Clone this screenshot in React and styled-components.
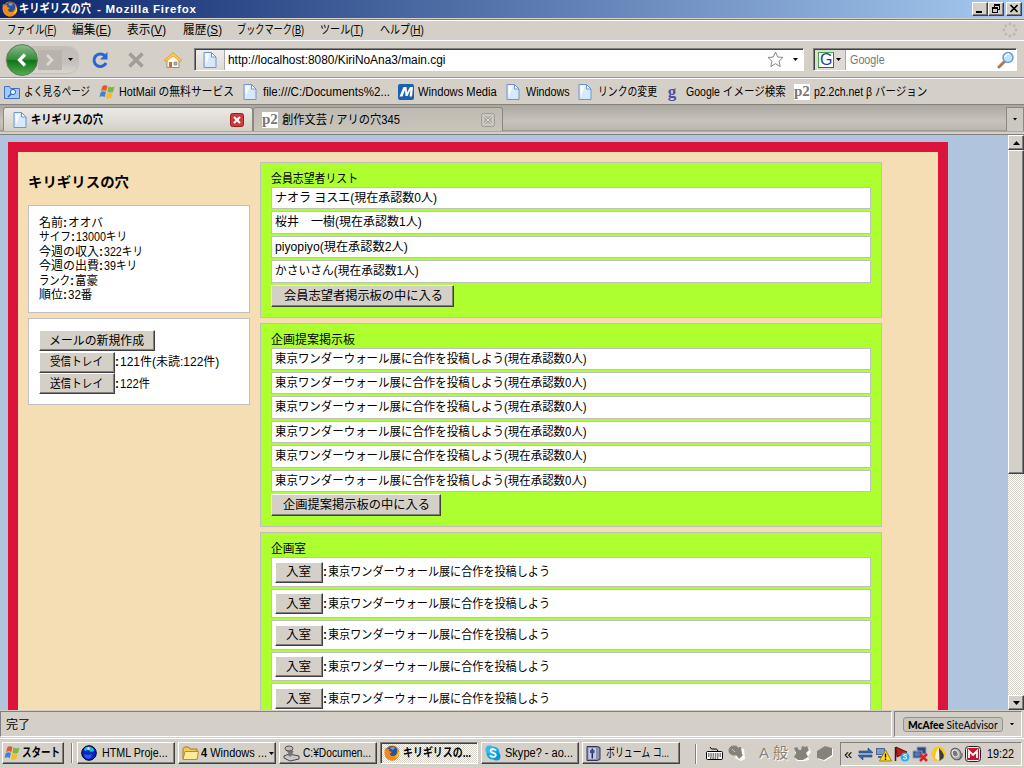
import { useLayoutEffect, useRef, useState } from 'react';
import styled, { createGlobalStyle, css } from 'styled-components';

const applicants = [
  { label: 'ナオラ ヨスエ(現在承認数0人)', w: 162 },
  { label: '桜井　一樹(現在承認数1人)', w: 147 },
  { label: 'piyopiyo(現在承認数2人)', w: 133 },
  { label: 'かさいさん(現在承認数1人)', w: 144 },
];

const proposals = Array(6).fill('東京ワンダーウォール展に合作を投稿しよう(現在承認数0人)');
const rooms = Array(5).fill('東京ワンダーウォール展に合作を投稿しよう');

const profile = [
  ['名前', 24, 'オオバ', 35],
  ['サイフ', 32, '13000キリ', 51],
  ['今週の収入', 60, '322キリ', 39],
  ['今週の出費', 60, '39キリ', 33],
  ['ランク', 31, '富豪', 23],
  ['順位', 24, '32番', 24],
];

const menus = [
  ['ファイル', 'F', 49, 16],
  ['編集', 'E', 39, 16],
  ['表示', 'V', 39, 17],
  ['履歴', 'S', 39, 15],
  ['ブックマーク', 'B', 67, 16],
  ['ツール', 'T', 43, 17],
  ['ヘルプ', 'H', 44, 0],
];

// 文字列を指定の幅に合わせて横に縮める
const Fit = ({ w, children }) => {
  const ref = useRef();
  const [scale, setScale] = useState(1);

  useLayoutEffect(() => {
    setScale(w / ref.current.offsetWidth);
  }, [w]);

  return (
    <FitBox $w={w}>
      <FitInner ref={ref} style={{ transform: `scaleX(${scale})` }}>
        {children}
      </FitInner>
    </FitBox>
  );
};

const FirefoxIcon = () => (
  <svg width="16" height="16" viewBox="0 0 16 16">
    <circle cx="8" cy="8" r="7.4" fill="#d9600c" />
    <circle cx="8.3" cy="6.6" r="5.3" fill="#24549c" />
    <path d="M6 3q3-2 5 0l-2 2-2-1z" fill="#62a9dc" />
    <path d="M1 3l2 1.5L5.5 4 5 6l3 1-2 1.5c0 3 4 3.5 6 1 1.5-2 1.5-4 .5-6.5C17 7 15 15 8.5 15.5 2 15.5-.5 9 1 3z" fill="#f08a1c" />
    <path d="M13 4c2 3 1 7-2 8.500 3 0 4-2 4-4.500z" fill="#ffd84a" />
  </svg>
);

const PageIcon = () => (
  <svg width="14" height="16" viewBox="0 0 14 16">
    <path d="M1 .5h7.500L13 5v10.500H1z" fill="#d7e8fb" stroke="#6d96cf" />
    <path d="M2 1.500h5L3 13z" fill="#fff" opacity=".8" />
    <path d="M8.500.5V5H13z" fill="#fff" stroke="#6d96cf" />
  </svg>
);

const WinFlag = () => (
  <svg width="17" height="16" viewBox="0 0 17 16">
    <path d="M3.500 2Q6 .5 8.500 2L7.300 7Q5 5.500 2 7z" fill="#e8562a" />
    <path d="M9.500 2.500q3 1.500 6 0L14 8q-3 1.300-5.600-.3z" fill="#7db93a" />
    <path d="M1.700 8q3-1.500 5.300 0l-1.300 5Q3 11.500.5 13z" fill="#3f82d8" />
    <path d="M8 8.700q3 1.500 5.700.3l-1.400 5Q9 15.500 6.700 14z" fill="#f5bd2c" />
  </svg>
);

const SearchFolder = () => (
  <svg width="16" height="14" viewBox="0 0 16 14">
    <path d="M.5 1.500h5l1 2h9v10H.5z" fill="#a9c9f5" stroke="#3f71c9" />
    <circle cx="9" cy="7" r="2.600" fill="#e5f1ff" stroke="#2f62bd" />
    <path d="M7 9l-3 3" stroke="#2f62bd" strokeWidth="1.500" />
  </svg>
);

const MediaIcon = () => (
  <svg width="16" height="16" viewBox="0 0 16 16">
    <rect width="16" height="16" rx="2" fill="#1d60ae" />
    <path d="M1.500 12.500h3L7 6l.5 6h2l3-6-1 6.500h2.500L15 3h-3L9 8.500 8.500 3h-3z" fill="#fff" />
  </svg>
);

const ReloadIcon = () => (
  <svg width="18" height="18" viewBox="0 0 18 18">
    <path d="M13.500 4.500A6.300 6.300 0 1 0 15 12" fill="none" stroke="#2468d0" strokeWidth="3" />
    <path d="M16.500 1v7.500H9z" fill="#2468d0" />
  </svg>
);

const StopIcon = () => (
  <svg width="18" height="18" viewBox="0 0 18 18">
    <path d="M2.500 2.500l13 13M15.500 2.500l-13 13" stroke="#a19e98" strokeWidth="3.600" />
  </svg>
);

const HomeIcon = () => (
  <svg width="20" height="18" viewBox="0 0 20 18">
    <path d="M4 8l6-5 6 5v8.500H4z" fill="#fffaf0" stroke="#a38d67" />
    <path d="M1 9.500l9-8 9 8-2 1-7-5.500-7 5.500z" fill="#ffc94d" stroke="#d99018" strokeWidth=".7" />
    <path d="M6 11h3v5H6z" fill="#b9743b" />
    <path d="M11 11h3v3h-3z" fill="#8dbcea" stroke="#8a7755" strokeWidth=".6" />
  </svg>
);

const StarIcon = () => (
  <svg width="17" height="17" viewBox="0 0 17 17">
    <path d="M8.500 1l2.200 5 5.300.5-4 3.600 1.200 5.400-4.700-2.800-4.700 2.800L5 10.100 1 6.500 6.300 6z" fill="#fff" stroke="#888" />
  </svg>
);

const LensIcon = () => (
  <svg width="18" height="18" viewBox="0 0 18 18">
    <path d="M8 10l-6 6" stroke="#b17a4e" strokeWidth="3" strokeLinecap="round" />
    <circle cx="11" cy="6.500" r="5" fill="#bfe3fa" stroke="#6a9cc9" strokeWidth="1.500" />
    <path d="M8 6q1-3 4-3" fill="none" stroke="#fff" strokeWidth="1.500" />
  </svg>
);

const Throbber = () => (
  <svg width="16" height="16" viewBox="0 0 16 16" fill="#bbb8b1">
    {[[8, 2], [12.200, 3.800], [14, 8], [12.200, 12.200], [8, 14], [3.800, 12.200], [2, 8], [3.800, 3.800]].map(([x, y]) => (
      <circle key={`${x}-${y}`} cx={x} cy={y} r="1.400" />
    ))}
  </svg>
);

const CloseMark = ({ active }) => (
  <svg width="14" height="14" viewBox="0 0 14 14">
    <rect x=".5" y=".5" width="13" height="13" rx="2" fill={active ? '#cf3a3c' : '#c9c6bf'} stroke={active ? '#9c1d22' : '#a09d97'} />
    <path d="M4 4l6 6M10 4l-6 6" stroke={active ? '#fff' : '#a09d97'} strokeWidth={active ? 2 : 3} />
    {!active && <path d="M4 4l6 6M10 4l-6 6" stroke="#e2dfd9" />}
  </svg>
);

const Arrow = ({ up, size = 5 }) => (
  <svg width={size} height={(size + 1) / 2} viewBox="0 0 6 3" preserveAspectRatio="none">
    <path d={up ? 'M0 3L3 0l3 3z' : 'M0 0h6L3 3z'} />
  </svg>
);

const Globe = () => (
  <svg width="16" height="16" viewBox="0 0 16 16">
    <circle cx="8" cy="8" r="7.300" fill="#0b22c4" stroke="#000" />
    <path d="M3 4l2-2 3-.5 4 1.500 1.500 3-3.500 1-3-2-3 1z" fill="#20b6e8" />
    <path d="M7 2l2 1-1 2-2-1z" fill="#e8f36a" />
    <path d="M3 9l4 1 4-1-1 4-3 1-3-2z" fill="#2958f0" />
  </svg>
);

const Folder = () => (
  <svg width="17" height="15" viewBox="0 0 17 15">
    <path d="M1 13V2.500L2.500 1h4L8 3h7v10z" fill="#f2cb54" stroke="#a17a17" />
    <path d="M3 5.500h13.500L15 13.500H1z" fill="#fceb9c" stroke="#b68e28" />
  </svg>
);

const ServerIcon = () => (
  <svg width="17" height="17" viewBox="0 0 17 17">
    <path d="M1 11l5-2 10 2v3l-9 2-6-3z" fill="#c9c9c9" stroke="#444" />
    <path d="M5 5l3 2-2 4" fill="none" stroke="#777" strokeWidth="4" />
    <ellipse cx="6" cy="3.500" rx="4" ry="2.500" fill="#bbb" stroke="#555" />
  </svg>
);

const SkypeIcon = () => (
  <svg width="16" height="16" viewBox="0 0 16 16">
    <circle cx="8" cy="8" r="6.600" fill="#15a9e8" />
    <circle cx="4.500" cy="4.500" r="4" fill="#35b9f0" />
    <circle cx="11.500" cy="11.500" r="4" fill="#0b96d6" />
    <path d="M11 5.500C9.500 3.500 5.500 4 5.500 6c0 2.200 5.300 1.500 5.300 4 0 2.200-4.300 2.500-5.800.3" fill="none" stroke="#fff" strokeWidth="1.800" />
  </svg>
);

const MixerIcon = () => (
  <svg width="15" height="16" viewBox="0 0 15 16">
    <path d="M1 1.500h10l3 1v12l-3 1H1z" fill="#8e90ad" stroke="#35364c" />
    <path d="M2.500 3h7.500v11H2.500z" fill="#c4c8e6" />
    <path d="M6.300 3.500v10" stroke="#222a58" strokeWidth="1.500" />
    <path d="M4 5h4.500v3H4z" fill="#3f4f91" />
  </svg>
);

const KeyboardIcon = () => (
  <svg width="17" height="14" viewBox="0 0 17 14">
    <path d="M4 1q1 3 4 2t4 2" fill="none" stroke="#000" />
    <rect x=".5" y="5.500" width="16" height="8" rx="1" fill="#fff" stroke="#000" />
    <path d="M2 8h13M2 10h13M4 12h9" stroke="#000" strokeDasharray="1.500 .8" />
  </svg>
);

const GhostBrush = () => (
  <svg width="18" height="16" viewBox="0 0 18 16">
    <path d="M12 3l4 1 1 10-4 2-6-3z" fill="#fff" />
    <ellipse cx="6" cy="5.500" rx="5.500" ry="5" fill="#858279" />
    <path d="M6 9l4-1 1-6h2l1 7 1 1-4 4-2-3z" fill="#858279" />
    <path d="M4 4l3 3" stroke="#c9c6be" />
  </svg>
);

const GhostHand = () => (
  <svg width="18" height="16" viewBox="0 0 18 16">
    <path d="M2 5l5 1 4-4 5 1 2 4-3 4 1 4-5 1H4l-2-3z" fill="#fff" />
    <path d="M1 3l3-1 2 3 2 0 1-4 3 1 2-1 2 4-3 3 2 4-5 3H5l-4-3 2-4z" fill="#858279" />
  </svg>
);

const GhostBox = () => (
  <svg width="17" height="16" viewBox="0 0 17 16">
    <path d="M2 7l7-6 8 3v7l-8 5-7-2z" fill="#fff" />
    <path d="M1 6l8-5 7 2v7l-8 5-7-2z" fill="#858279" />
  </svg>
);

const TransferIcon = () => (
  <svg width="15" height="14" viewBox="0 0 15 14">
    <path d="M1 4h9V1l4.500 4v1H1zM14 10H5v3L.5 9V8H14z" fill="#3869b8" stroke="#1f3f80" strokeWidth=".6" />
  </svg>
);

const NetWarn = () => (
  <svg width="17" height="16" viewBox="0 0 17 16">
    <path d="M1 2h9v7H1zM3 10h5v2H3z" fill="#53658b" />
    <path d="M2 3h7v5H2z" fill="#7b9bd0" />
    <path d="M10.500 4l6 11h-12z" fill="#ffdf26" stroke="#9c8310" />
    <path d="M10.500 7.500v4M10.500 12.500v1.500" stroke="#000" strokeWidth="1.300" />
  </svg>
);

const FlagIcon = () => (
  <svg width="16" height="16" viewBox="0 0 16 16">
    <path d="M1.500 1v14" stroke="#4b1010" strokeWidth="1.500" />
    <path d="M2 1l11 5-10 5z" fill="#c21919" stroke="#6d0b0b" />
    <circle cx="11" cy="11" r="4.500" fill="#2ab1ec" />
    <path d="M13 9q-4-1-3.500.7L12.500 11q1 3-3.500 1.500" fill="none" stroke="#fff" />
  </svg>
);

const NetCut = () => (
  <svg width="16" height="16" viewBox="0 0 16 16">
    <path d="M5 1h9v7H5zM1 5h9v7H1z" fill="#31487d" stroke="#93a0bf" />
    <path d="M2.500 6.500h6v4h-6z" fill="#4c78c4" />
    <path d="M8 8l7 7M15 8l-7 7" stroke="#e02222" strokeWidth="2.500" />
  </svg>
);

const DropIcon = () => (
  <svg width="17" height="16" viewBox="0 0 17 16">
    <path d="M1 8L4 2l5-2 5 3 2 5-4 6-8 1z" fill="#ffc41c" />
    <path d="M8 2q6 6 5 10-4 4-8 0 0-4 3-10z" fill="#f4f1e4" />
    <path d="M9 2q6 6 4.500 10l-4 3z" fill="#3a3a3a" />
  </svg>
);

const SpeakerIcon = () => (
  <svg width="14" height="15" viewBox="0 0 14 15">
    <ellipse cx="7" cy="7" rx="5" ry="6" fill="#aaa" stroke="#555" transform="rotate(-25 7 7)" />
    <ellipse cx="6" cy="6.500" rx="2.800" ry="3.500" fill="#777" stroke="#eee" transform="rotate(-25 6 6)" />
    <path d="M10 13q4-2 3-7" fill="none" stroke="#666" />
  </svg>
);

const McAfeeM = () => (
  <svg width="16" height="16" viewBox="0 0 16 16">
    <rect x=".5" y=".5" width="15" height="15" rx="3" fill="#eee" stroke="#222" />
    <rect x="2" y="2" width="12" height="12" rx="1" fill="#c41432" />
    <path d="M4 12V5l4 4 4-4v7" fill="none" stroke="#fff" strokeWidth="1.800" />
  </svg>
);

const P2Icon = () => <P2>p2</P2>;

const bookmarks = [
  { icon: SearchFolder, label: 'よく見るページ', w: 66, gap: 9 },
  { icon: WinFlag, label: 'HotMail の無料サービス', w: 115, gap: 9 },
  { icon: PageIcon, label: 'file:///C:/Documents%2...', w: 127, gap: 8 },
  { icon: MediaIcon, label: 'Windows Media', w: 79, gap: 9 },
  { icon: PageIcon, label: 'Windows', w: 44, gap: 8 },
  { icon: PageIcon, label: 'リンクの変更', w: 59, gap: 9 },
  { icon: () => <LittleG>g</LittleG>, label: 'Google イメージ検索', w: 100, gap: 8 },
  { icon: P2Icon, label: 'p2.2ch.net β バージョン', w: 113, gap: 0 },
];

const tasks = [
  { icon: Globe, label: 'HTML Proje...', w: 66, gap: 5 },
  { icon: Folder, label: <><b>4</b> Windows ...</>, w: 66, gap: 2, arrow: true },
  { icon: ServerIcon, label: 'C:¥Documen...', w: 68, gap: 3 },
  { icon: FirefoxIcon, label: 'キリギリスの...', w: 68, gap: 3, active: true },
  { icon: SkypeIcon, label: 'Skype? - ao...', w: 68, gap: 4 },
  { icon: MixerIcon, label: 'ボリューム コ...', w: 63, gap: 5 },
];

const App = () => (
  <Screen>
    <GlobalStyle />
    <TitleBar>
      <FirefoxIcon />
      <Title>
        <Fit w={72}>キリギリスの穴</Fit>
        <TitleApp>- Mozilla Firefox</TitleApp>
      </Title>
      <WinButton>
        <svg width="10" height="9"><path d="M1 7h6v2H1z" /></svg>
      </WinButton>
      <WinButton>
        <svg width="10" height="9" viewBox="0 0 10 9"><path d="M3 0h6v6H7V5h1V2H4v1H3zM1 3h6v6H1zm1 2v3h4V5z" fillRule="evenodd" /></svg>
      </WinButton>
      <WinButton $last>
        <svg width="10" height="9" viewBox="0 0 10 9"><path d="M1.500 1l7 7M8.500 1l-7 7" stroke="#000" strokeWidth="1.700" /></svg>
      </WinButton>
    </TitleBar>

    <MenuBar>
      {menus.map(([label, key, w, gap]) => (
        <MenuItem key={key} $gap={gap}>
          <Fit w={w}>{label}(<u>{key}</u>)</Fit>
        </MenuItem>
      ))}
      <MenuSpacer />
      <Throbber />
    </MenuBar>

    <NavBar>
      <NavGroup>
        <BackButton>
          <svg width="16" height="18" viewBox="0 0 16 18"><path d="M11 3.500L5.500 9l5.500 5.500" fill="none" stroke="#fff" strokeWidth="3.200" /></svg>
        </BackButton>
        <ForwardButton>
          <svg width="10" height="14" viewBox="0 0 10 14"><path d="M2 2l5 5-5 5" fill="none" stroke="#dedbd6" strokeWidth="2.500" /></svg>
        </ForwardButton>
        <Arrow />
      </NavGroup>
      <NavTools>
        <ReloadIcon />
        <StopIcon />
        <HomeIcon />
      </NavTools>
      <AddressBar>
        <SiteButton><PageIcon /></SiteButton>
        <Address><Fit w={217}>http://localhost:8080/KiriNoAna3/main.cgi</Fit></Address>
        <StarIcon />
        <AddressArrow><Arrow size={5} /></AddressArrow>
      </AddressBar>
      <SearchBar>
        <EngineButton>
          <GoogleG>G</GoogleG>
          <Arrow />
        </EngineButton>
        <SearchHint><Fit w={35}>Google</Fit></SearchHint>
        <LensIcon />
      </SearchBar>
    </NavBar>

    <BookmarkBar>
      {bookmarks.map(({ icon: Icon, label, w, gap }) => (
        <Bookmark key={label} $gap={gap}>
          <BookmarkIcon><Icon /></BookmarkIcon>
          <Fit w={w}>{label}</Fit>
        </Bookmark>
      ))}
    </BookmarkBar>

    <TabBar>
      <Tab $active>
        <PageIcon />
        <TabLabel><Fit w={72}>キリギリスの穴</Fit></TabLabel>
        <CloseMark active />
      </Tab>
      <Tab>
        <P2Icon />
        <TabLabel><Fit w={118}>創作文芸 / アリの穴345</Fit></TabLabel>
        <CloseMark />
      </Tab>
      <TabsMenu><Arrow size={4} /></TabsMenu>
    </TabBar>

    <Browser>
      <Viewport>
        <Page>
          <Side>
            <SiteTitle><Fit w={101}>キリギリスの穴</Fit></SiteTitle>
            <ProfileBox>
              {profile.map(([name, nameW, value, valueW]) => (
                <ProfileLine key={name}>
                  <Fit w={nameW}>{name}</Fit>
                  <Colon>:</Colon>
                  <Fit w={valueW}>{value}</Fit>
                </ProfileLine>
              ))}
            </ProfileBox>
            <MailBox>
              <MailLine><PageButton $w={116}><Fit w={95}>メールの新規作成</Fit></PageButton></MailLine>
              <MailLine>
                <PageButton $w={76}><Fit w={53}>受信トレイ</Fit></PageButton>
                <Colon>:</Colon>
                <Fit w={99}>121件(未読:122件)</Fit>
              </MailLine>
              <MailLine>
                <PageButton $w={76}><Fit w={53}>送信トレイ</Fit></PageButton>
                <Colon>:</Colon>
                <Fit w={30}>122件</Fit>
              </MailLine>
            </MailBox>
          </Side>
          <Main>
            <Panel>
              <PanelTitle><Fit w={87}>会員志望者リスト</Fit></PanelTitle>
              {applicants.map(({ label, w }) => (
                <Row key={label}><Fit w={w}>{label}</Fit></Row>
              ))}
              <PageButton $w={183} $h={22}><Fit w={159}>会員志望者掲示板の中に入る</Fit></PageButton>
            </Panel>
            <Panel>
              <PanelTitle><Fit w={84}>企画提案掲示板</Fit></PanelTitle>
              {proposals.map((text, idx) => (
                <Row key={idx}><Fit w={312}>{text}</Fit></Row>
              ))}
              <PageButton $w={170} $h={22}><Fit w={147}>企画提案掲示板の中に入る</Fit></PageButton>
            </Panel>
            <Panel>
              <PanelTitle><Fit w={35}>企画室</Fit></PanelTitle>
              {rooms.map((text, idx) => (
                <RoomRow key={idx}>
                  <PageButton $w={48}><Fit w={25}>入室</Fit></PageButton>
                  <Colon>:</Colon>
                  <Fit w={222}>{text}</Fit>
                </RoomRow>
              ))}
            </Panel>
          </Main>
        </Page>
      </Viewport>
      <Scrollbar>
        <ScrollButton><Arrow up size={7} /></ScrollButton>
        <ScrollThumb />
        <ScrollTrack />
        <ScrollButton><Arrow size={7} /></ScrollButton>
      </Scrollbar>
    </Browser>

    <StatusBar>
      <StatusText><Fit w={24}>完了</Fit></StatusText>
      <StatusPanel>
        <Advisor><Fit w={90}><b>McAfee</b> SiteAdvisor</Fit></Advisor>
        <Arrow size={4} />
      </StatusPanel>
    </StatusBar>

    <TaskBar>
      <StartButton>
        <WinFlag />
        <Fit w={38}>スタート</Fit>
      </StartButton>
      <Grip />
      <TaskList>
        {tasks.map(({ icon: Icon, label, w, gap, active, arrow }, idx) => (
          <Task key={idx} $active={active} $gap={gap}>
            <Icon />
            <Fit w={w}>{label}</Fit>
            {arrow && <Arrow />}
          </Task>
        ))}
      </TaskList>
      <LanguageBar>
        <Grip />
        <KeyboardIcon />
        <GhostBrush />
        <ImeText>
          <span>A</span>
          <span>般</span>
        </ImeText>
        <GhostHand />
        <GhostBox />
      </LanguageBar>
      <Tray>
        <More>«</More>
        <TransferIcon />
        <NetWarn />
        <FlagIcon />
        <NetCut />
        <DropIcon />
        <SpeakerIcon />
        <McAfeeM />
        <Clock><Fit w={27}>19:22</Fit></Clock>
      </Tray>
    </TaskBar>
  </Screen>
);

export default App;

const GlobalStyle = createGlobalStyle`
  * {
    box-sizing: border-box;
  }

  body {
    margin: 0;
    overflow: hidden;
    font-family: 'Liberation Sans', 'Noto Sans CJK JP', sans-serif;
    font-size: 12px;
    line-height: 14px;
    color: #000;
  }

  svg {
    display: block;
    flex-shrink: 0;
  }
`;

const raised = css`
  border: 1px solid;
  border-color: #fff #404040 #404040 #fff;
  box-shadow: inset -1px -1px 0 #808080;
  background: #d4d0c8;
`;

const sunken = css`
  border: 1px solid;
  border-color: #808080 #fff #fff #808080;
  box-shadow: inset 1px 1px 0 #404040;
`;

const FitBox = styled.span`
  display: inline-block;
  flex-shrink: 0;
  width: ${({ $w }) => $w}px;
  white-space: pre;
`;

const FitInner = styled.span`
  display: inline-block;
  transform-origin: 0 50%;
`;

const Colon = styled.b`
  display: inline-block;
  flex-shrink: 0;
  width: 5px;
`;

const Screen = styled.div`
  width: 1024px;
  height: 768px;
  display: flex;
  flex-direction: column;
  overflow: hidden;
  background: #d4d0c8;
`;

const TitleBar = styled.header`
  height: 18px;
  flex-shrink: 0;
  display: flex;
  align-items: center;
  padding: 0 2px;
  background: linear-gradient(90deg, #0a246a, #a6caf0);
`;

const Title = styled.div`
  flex: 1;
  display: flex;
  gap: 6px;
  color: #fff;
  font-weight: bold;
  padding-left: 1px;
`;

const TitleApp = styled.span`
  font-size: 11.5px;
  letter-spacing: 0.75px;
`;

const WinButton = styled.div`
  ${raised}
  width: 16px;
  height: 14px;
  padding: 1px 2px;
  margin-left: ${({ $last }) => ($last ? 2 : 0)}px;
`;

const MenuBar = styled.nav`
  height: 23px;
  flex-shrink: 0;
  display: flex;
  align-items: center;
  padding: 2px 6px 0 7px;
  border-bottom: 1px solid #fff;
  background: linear-gradient(#d4d0c8 1px, #808080 1px, #808080 2px, #fff 2px, #fff 3px, #d4d0c8 3px);
`;

const MenuItem = styled.div`
  margin-right: ${({ $gap }) => $gap}px;
`;

const MenuSpacer = styled.div`
  flex: 1;
`;

const NavBar = styled.div`
  height: 38px;
  flex-shrink: 0;
  display: flex;
  align-items: center;
  padding: 0 7px 0 5px;
  border-bottom: 1px solid #fff;
  box-shadow: inset 0 -1px 0 #9b9790;
`;

const NavGroup = styled.div`
  width: 74px;
  height: 28px;
  display: flex;
  align-items: center;
  border: 1px solid #c4c0b8;
  border-radius: 15px 12px 12px 15px;
  background: linear-gradient(#c2beb7, #c5c1ba 60%, #dad7d0);
`;

const BackButton = styled.div`
  width: 32px;
  height: 32px;
  flex-shrink: 0;
  display: flex;
  align-items: center;
  justify-content: center;
  border: 1px solid #5b7b5b;
  border-radius: 50%;
  background: linear-gradient(#8ab989, #338c38 48%, #10731a 52%, #52ae50);
`;

const ForwardButton = styled.div`
  width: 24px;
  height: 20px;
  display: flex;
  align-items: center;
  justify-content: center;
  margin-right: 6px;
  background: #b8b4ad;
`;

const NavTools = styled.div`
  display: flex;
  align-items: center;
  gap: 18px;
  padding-left: 12px;
  width: 115px;
`;

const AddressBar = styled.div`
  ${sunken}
  width: 611px;
  height: 23px;
  display: flex;
  align-items: center;
  padding: 1px;
  background: #fff;
`;

const SiteButton = styled.div`
  width: 29px;
  height: 20px;
  display: flex;
  align-items: center;
  justify-content: center;
  background: linear-gradient(#eee, #dedbd5);
  border-right: 1px solid #aaa;
`;

const Address = styled.div`
  flex: 1;
  padding-left: 3px;
`;

const AddressArrow = styled.div`
  padding: 0 4px 0 9px;
`;

const SearchBar = styled(AddressBar)`
  width: 204px;
  margin-left: 9px;
`;

const EngineButton = styled.div`
  width: 31px;
  height: 20px;
  display: flex;
  align-items: center;
  justify-content: space-between;
  padding: 0 4px 0 3px;
  border-right: 1px solid #aaa;
  background: #dedbd5;
`;

const GoogleG = styled.span`
  width: 16px;
  height: 16px;
  font-size: 16px;
  line-height: 14px;
  text-align: center;
  color: #1b3fa6;
  background: #fff;
  border: 1px solid;
  border-color: #3cab41 #d22c2c #2857c4 #3cab41;
`;

const SearchHint = styled.div`
  flex: 1;
  padding-left: 4px;
  color: #777;
`;

const BookmarkBar = styled.div`
  height: 26px;
  flex-shrink: 0;
  display: flex;
  align-items: center;
  padding-left: 4px;
  border-bottom: 1px solid #85827c;
`;

const Bookmark = styled.div`
  display: flex;
  align-items: center;
  margin-right: ${({ $gap }) => $gap}px;
`;

const BookmarkIcon = styled.div`
  width: 16px;
  margin-right: 4px;
`;

const P2 = styled.span`
  display: block;
  width: 16px;
  height: 16px;
  font: bold 15px/14px 'Liberation Serif', serif;
  color: #777;
  background: #fff;
`;

const LittleG = styled.span`
  display: block;
  width: 12px;
  text-align: center;
  font: bold 17px/14px 'Liberation Serif', serif;
  color: #4c4da8;
`;

const TabBar = styled.div`
  height: 30px;
  flex-shrink: 0;
  display: flex;
  align-items: flex-end;
  padding: 3px 0 3px 3px;
  border-bottom: 1px solid #808080;
  background: linear-gradient(#aaa7a1, #c8c4bc 55%, #bab6ae 25px, #85827c 26px, #d4d0c8 27px);
`;

const Tab = styled.div`
  width: 250px;
  height: 24px;
  display: flex;
  align-items: center;
  padding: 0 ${({ $active }) => ($active ? 8 : 7)}px 0 ${({ $active }) => ($active ? 9 : 8)}px;
  border: 1px solid #8b8882;
  border-bottom: none;
  border-radius: 3px 3px 0 0;
  font-weight: ${({ $active }) => ($active ? 'bold' : 'normal')};
  background: ${({ $active }) => ($active ? 'linear-gradient(#eceae7, #d4d0c8)' : 'linear-gradient(#bebab3, #c9c5bd)')};
`;

const TabLabel = styled.div`
  flex: 1;
  padding-left: 4px;
`;

const TabsMenu = styled.div`
  width: 18px;
  height: 24px;
  margin-left: auto;
  display: flex;
  align-items: center;
  justify-content: center;
  border: 1px solid #8b8882;
  border-bottom: none;
  background: #cbc8c0;
`;

const Browser = styled.div`
  height: 575px;
  flex-shrink: 0;
  display: flex;
`;

const Viewport = styled.div`
  width: 1008px;
  padding: 7px 8px 0;
  overflow: hidden;
  background: #b0c4de;
`;

const Page = styled.div`
  width: 940px;
  height: 900px;
  display: flex;
  gap: 10px;
  padding: 10px;
  border: 10px solid #dc143c;
  background: #f5deb3;
`;

const Side = styled.aside`
  width: 222px;
`;

const SiteTitle = styled.h1`
  height: 43px;
  margin: 0;
  padding-top: 12px;
  font-size: 14px;
  line-height: 16px;
`;

const ProfileBox = styled.section`
  height: 108px;
  margin-bottom: 5px;
  padding: 10px;
  border: 1px solid #c0c0c0;
  background: #fff;
`;

const ProfileLine = styled.div`
  display: flex;
  height: 14.4px;
  line-height: 14.4px;
`;

const MailBox = styled.section`
  height: 87px;
  padding: 11px 10px;
  border: 1px solid #c0c0c0;
  background: #fff;
`;

const MailLine = styled.div`
  height: 21.6px;
  display: flex;
  align-items: center;
`;

const PageButton = styled.button`
  ${raised}
  width: ${({ $w }) => $w}px;
  height: ${({ $h }) => $h || 21}px;
  flex-shrink: 0;
  display: flex;
  align-items: center;
  justify-content: center;
  padding: 0 1px 0 0;
  font: inherit;
  color: #000;
`;

const Main = styled.main`
  width: 622px;
`;

const Panel = styled.section`
  margin-bottom: 5px;
  padding: 9px 10px 10px;
  border: 1px solid #c0c0c0;
  background: #adff2f;
`;

const PanelTitle = styled.div`
  height: 15px;
  line-height: 15px;
`;

const Row = styled.div`
  height: 22.4px;
  margin-bottom: 2px;
  padding: 3px 3px 0;
  border: 1px solid #c0c0c0;
  background: #fff;
`;

const RoomRow = styled.div`
  height: 29.6px;
  margin-bottom: 2px;
  display: flex;
  align-items: center;
  padding: 1px 3px 0;
  border: 1px solid #c0c0c0;
  background: #fff;
`;

const Scrollbar = styled.div`
  width: 16px;
  display: flex;
  flex-direction: column;
`;

const ScrollButton = styled.div`
  ${raised}
  height: 15px;
  flex-shrink: 0;
  display: flex;
  align-items: center;
  justify-content: center;
`;

const ScrollThumb = styled.div`
  ${raised}
  height: 324px;
`;

const ScrollTrack = styled.div`
  flex: 1;
  background: repeating-conic-gradient(#fff 0 25%, #d4d0c8 0 50%) 0 0 / 2px 2px;
`;

const StatusBar = styled.footer`
  height: 28px;
  flex-shrink: 0;
  display: flex;
  gap: 2px;
  padding: 1px 2px 1px 0;
`;

const StatusText = styled.div`
  width: 892px;
  padding: 6px 5px 0;
  border: 1px solid;
  border-color: #808080 #fff #fff #808080;
`;

const StatusPanel = styled.div`
  flex: 1;
  display: flex;
  align-items: center;
  gap: 7px;
  padding-left: 8px;
  border: 1px solid;
  border-color: #808080 #fff #fff #808080;
`;

const Advisor = styled.div`
  width: 100px;
  height: 15px;
  padding-left: 4px;
  line-height: 13px;
  font-size: 11px;
  font-family: Lato, sans-serif;
  border: 1px solid #96938d;
  border-radius: 3px;
  background: #c7c4bd;

  b {
    font-weight: 900;
  }
`;

const TaskBar = styled.footer`
  flex: 1;
  display: flex;
  align-items: flex-start;
  padding: 3px 2px 0;
  border-top: 1px solid #fff;
`;

const StartButton = styled.div`
  ${raised}
  width: 62px;
  height: 22px;
  display: flex;
  align-items: center;
  gap: 1px;
  padding-left: 1px;
  font-weight: bold;
`;

const Grip = styled.div`
  width: 2px;
  height: 20px;
  margin: 1px 4px 0 7px;
  border-left: 1px solid #808080;
  border-right: 1px solid #fff;
`;

const TaskList = styled.div`
  display: flex;
  gap: 3px;
  width: 610px;
`;

const Task = styled.div`
  ${raised}
  width: 98px;
  height: 22px;
  display: flex;
  align-items: center;
  gap: ${({ $gap }) => $gap}px;
  padding-left: 3px;
  ${({ $active }) =>
    $active &&
    css`
      ${sunken}
      font-weight: bold;
      background: repeating-conic-gradient(#fff 0 25%, #d4d0c8 0 50%) 0 0 / 2px 2px;
    `}
`;

const LanguageBar = styled.div`
  display: flex;
  align-items: center;
  height: 22px;
  gap: 5px;
  width: 148px;
  padding-left: 1px;
`;

const ImeText = styled.div`
  display: flex;
  gap: 4px;
  padding-left: 8px;
  font-size: 15px;
  color: #858279;
  text-shadow: 1px 1px 0 #fff;
`;

const Tray = styled.div`
  width: 182px;
  height: 24px;
  margin-left: auto;
  display: flex;
  align-items: center;
  gap: 2px;
  padding-left: 3px;
  border: 1px solid;
  border-color: #808080 #fff #fff #808080;
`;

const More = styled.span`
  width: 12px;
  font-size: 15px;
`;

const Clock = styled.span`
  margin-left: 4px;
`;
